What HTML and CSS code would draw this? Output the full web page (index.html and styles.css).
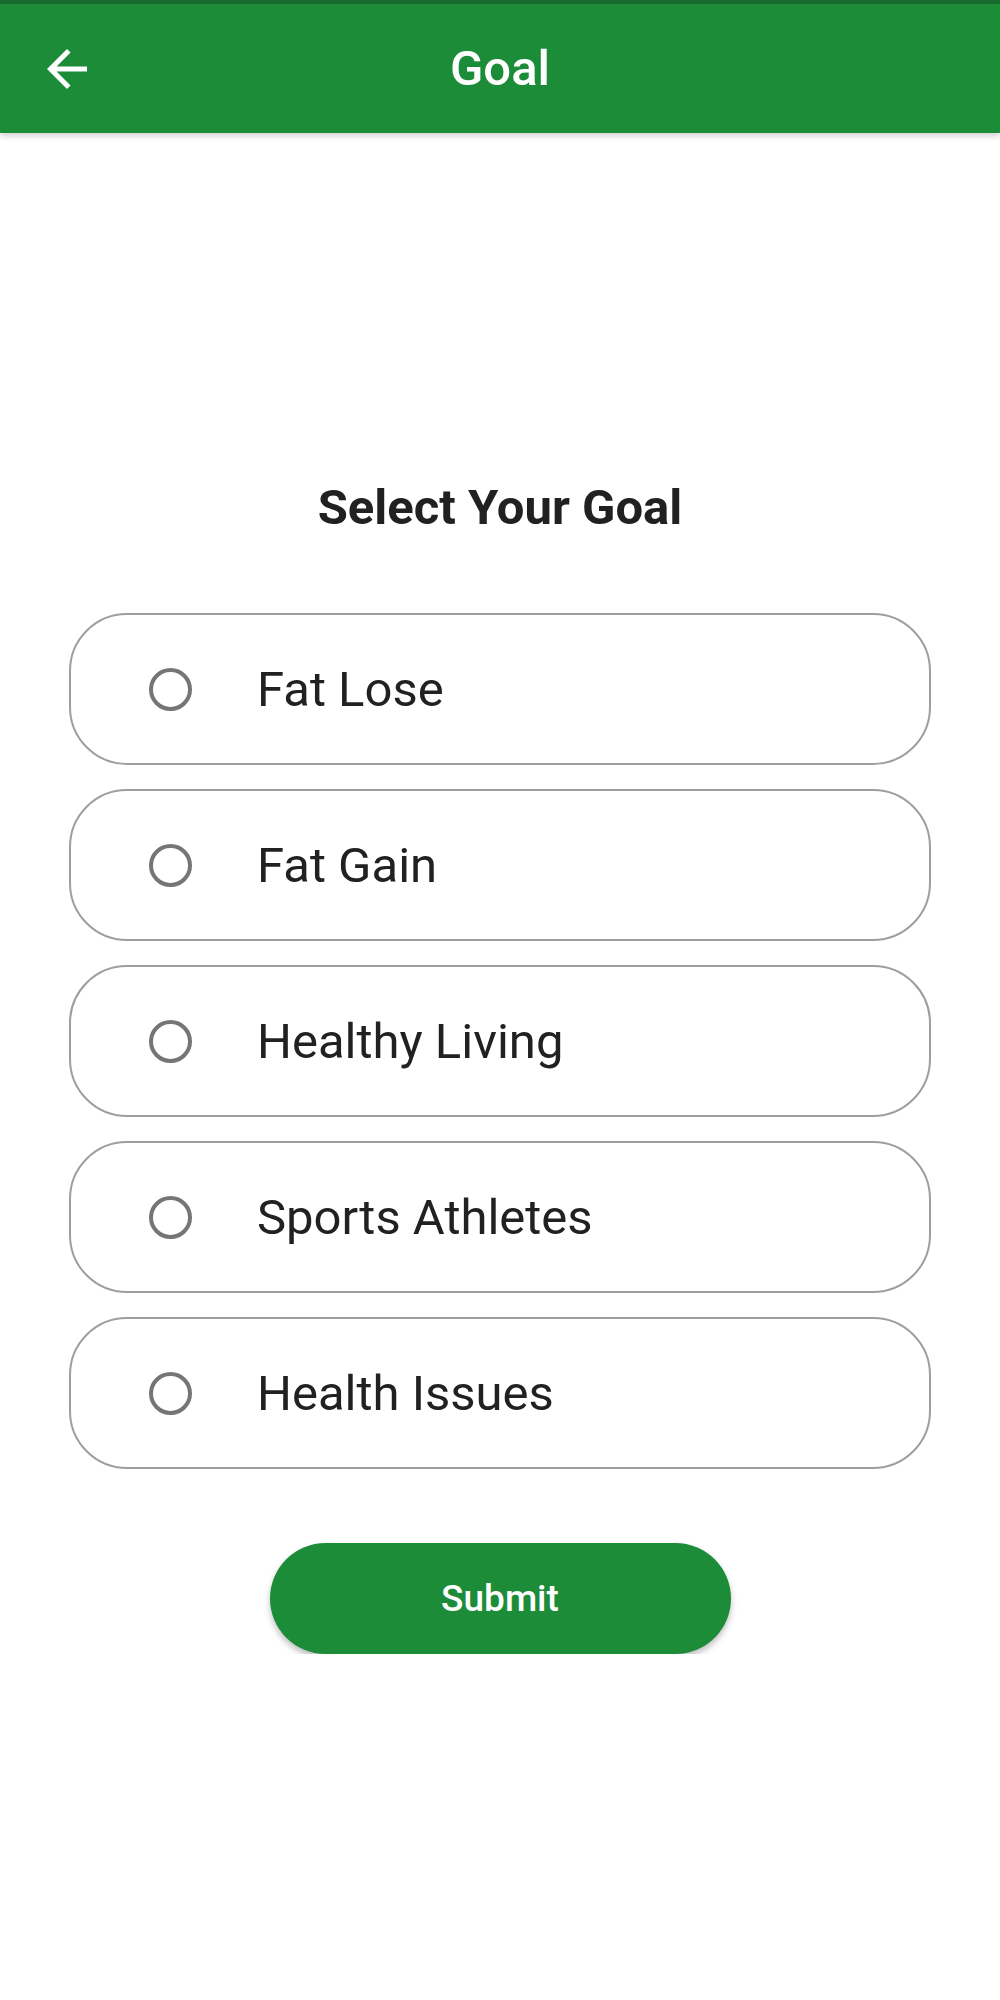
FILE: index.html
```html
<!DOCTYPE html>
<html lang="en">
<head>
    <meta charset="UTF-8">
    <meta name="viewport" content="width=device-width, initial-scale=1.0">
    <title>Goal</title>
    <link rel="stylesheet" href="styles.css">
</head>
<body>
    <header class="app-bar">
        <button class="back-btn" aria-label="Back">
            <svg width="60" height="60" viewBox="0 0 24 24">
                <path d="M20 11H7.83l5.59-5.59L12 4l-8 8 8 8 1.41-1.41L7.83 13H20v-2z" fill="#ffffff"/>
            </svg>
        </button>
        <h1 class="app-title">Goal</h1>
    </header>

    <main id="container">
        <h2 class="section-title">Select Your Goal</h2>

        <form class="goal-form">
            <label class="goal-option">
                <input type="radio" name="goal" value="fat_lose">
                <span class="radio-mark"></span>
                <span class="goal-text">Fat Lose</span>
            </label>
            <label class="goal-option">
                <input type="radio" name="goal" value="fat_gain">
                <span class="radio-mark"></span>
                <span class="goal-text">Fat Gain</span>
            </label>
            <label class="goal-option">
                <input type="radio" name="goal" value="healthy_living">
                <span class="radio-mark"></span>
                <span class="goal-text">Healthy Living</span>
            </label>
            <label class="goal-option">
                <input type="radio" name="goal" value="sports_athletes">
                <span class="radio-mark"></span>
                <span class="goal-text">Sports Athletes</span>
            </label>
            <label class="goal-option">
                <input type="radio" name="goal" value="health_issues">
                <span class="radio-mark"></span>
                <span class="goal-text">Health Issues</span>
            </label>

            <div class="submit-row">
                <button type="submit" class="submit-btn">Submit</button>
            </div>
        </form>
    </main>
</body>
</html>
```

FILE: styles.css
```css
body {
    font-family: Roboto, "Liberation Sans", Arial, sans-serif;
    background-color: #ffffff;
    margin: 0;
    padding: 0;
    color: #212121;
}

.app-bar {
    height: 129px;
    background-color: #1c8c38;
    border-top: 4px solid #17692c;
    box-shadow: 0 3px 6px rgba(0, 0, 0, 0.18);
    display: flex;
    align-items: center;
    position: relative;
}

.back-btn {
    background: none;
    border: none;
    padding: 0;
    margin-left: 37px;
    width: 60px;
    height: 60px;
    cursor: pointer;
    display: flex;
}

.app-title {
    position: absolute;
    left: 0;
    right: 0;
    margin: 0;
    text-align: center;
    color: #ffffff;
    font-size: 49px;
    font-weight: 500;
    pointer-events: none;
}

#container {
    padding: 0 69px;
}

.section-title {
    margin: 345px 0 0;
    text-align: center;
    font-size: 49px;
    font-weight: 700;
    line-height: 60px;
    color: #212121;
}

.goal-form {
    margin-top: 75px;
    display: flex;
    flex-direction: column;
    gap: 24px;
}

.goal-option {
    height: 148px;
    border: 2px solid #9e9e9e;
    border-radius: 58px;
    display: flex;
    align-items: center;
    padding-left: 78px;
    cursor: pointer;
}

.goal-option input {
    display: none;
}

.radio-mark {
    width: 35px;
    height: 35px;
    border: 4px solid #757575;
    border-radius: 50%;
    flex-shrink: 0;
}

.goal-option input:checked + .radio-mark {
    border-color: #1c8c38;
    box-shadow: inset 0 0 0 7px #ffffff;
    background-color: #1c8c38;
}

.goal-text {
    margin-left: 65px;
    font-size: 49px;
    color: #212121;
}

.submit-row {
    display: flex;
    justify-content: center;
    margin-top: 50px;
}

.submit-btn {
    width: 461px;
    height: 111px;
    border: none;
    border-radius: 56px;
    background-color: #1c8c38;
    color: #ffffff;
    font-family: Roboto, "Liberation Sans", Arial, sans-serif;
    font-size: 37px;
    font-weight: 500;
    box-shadow: 0 4px 6px rgba(0, 0, 0, 0.25);
    cursor: pointer;
}
```
